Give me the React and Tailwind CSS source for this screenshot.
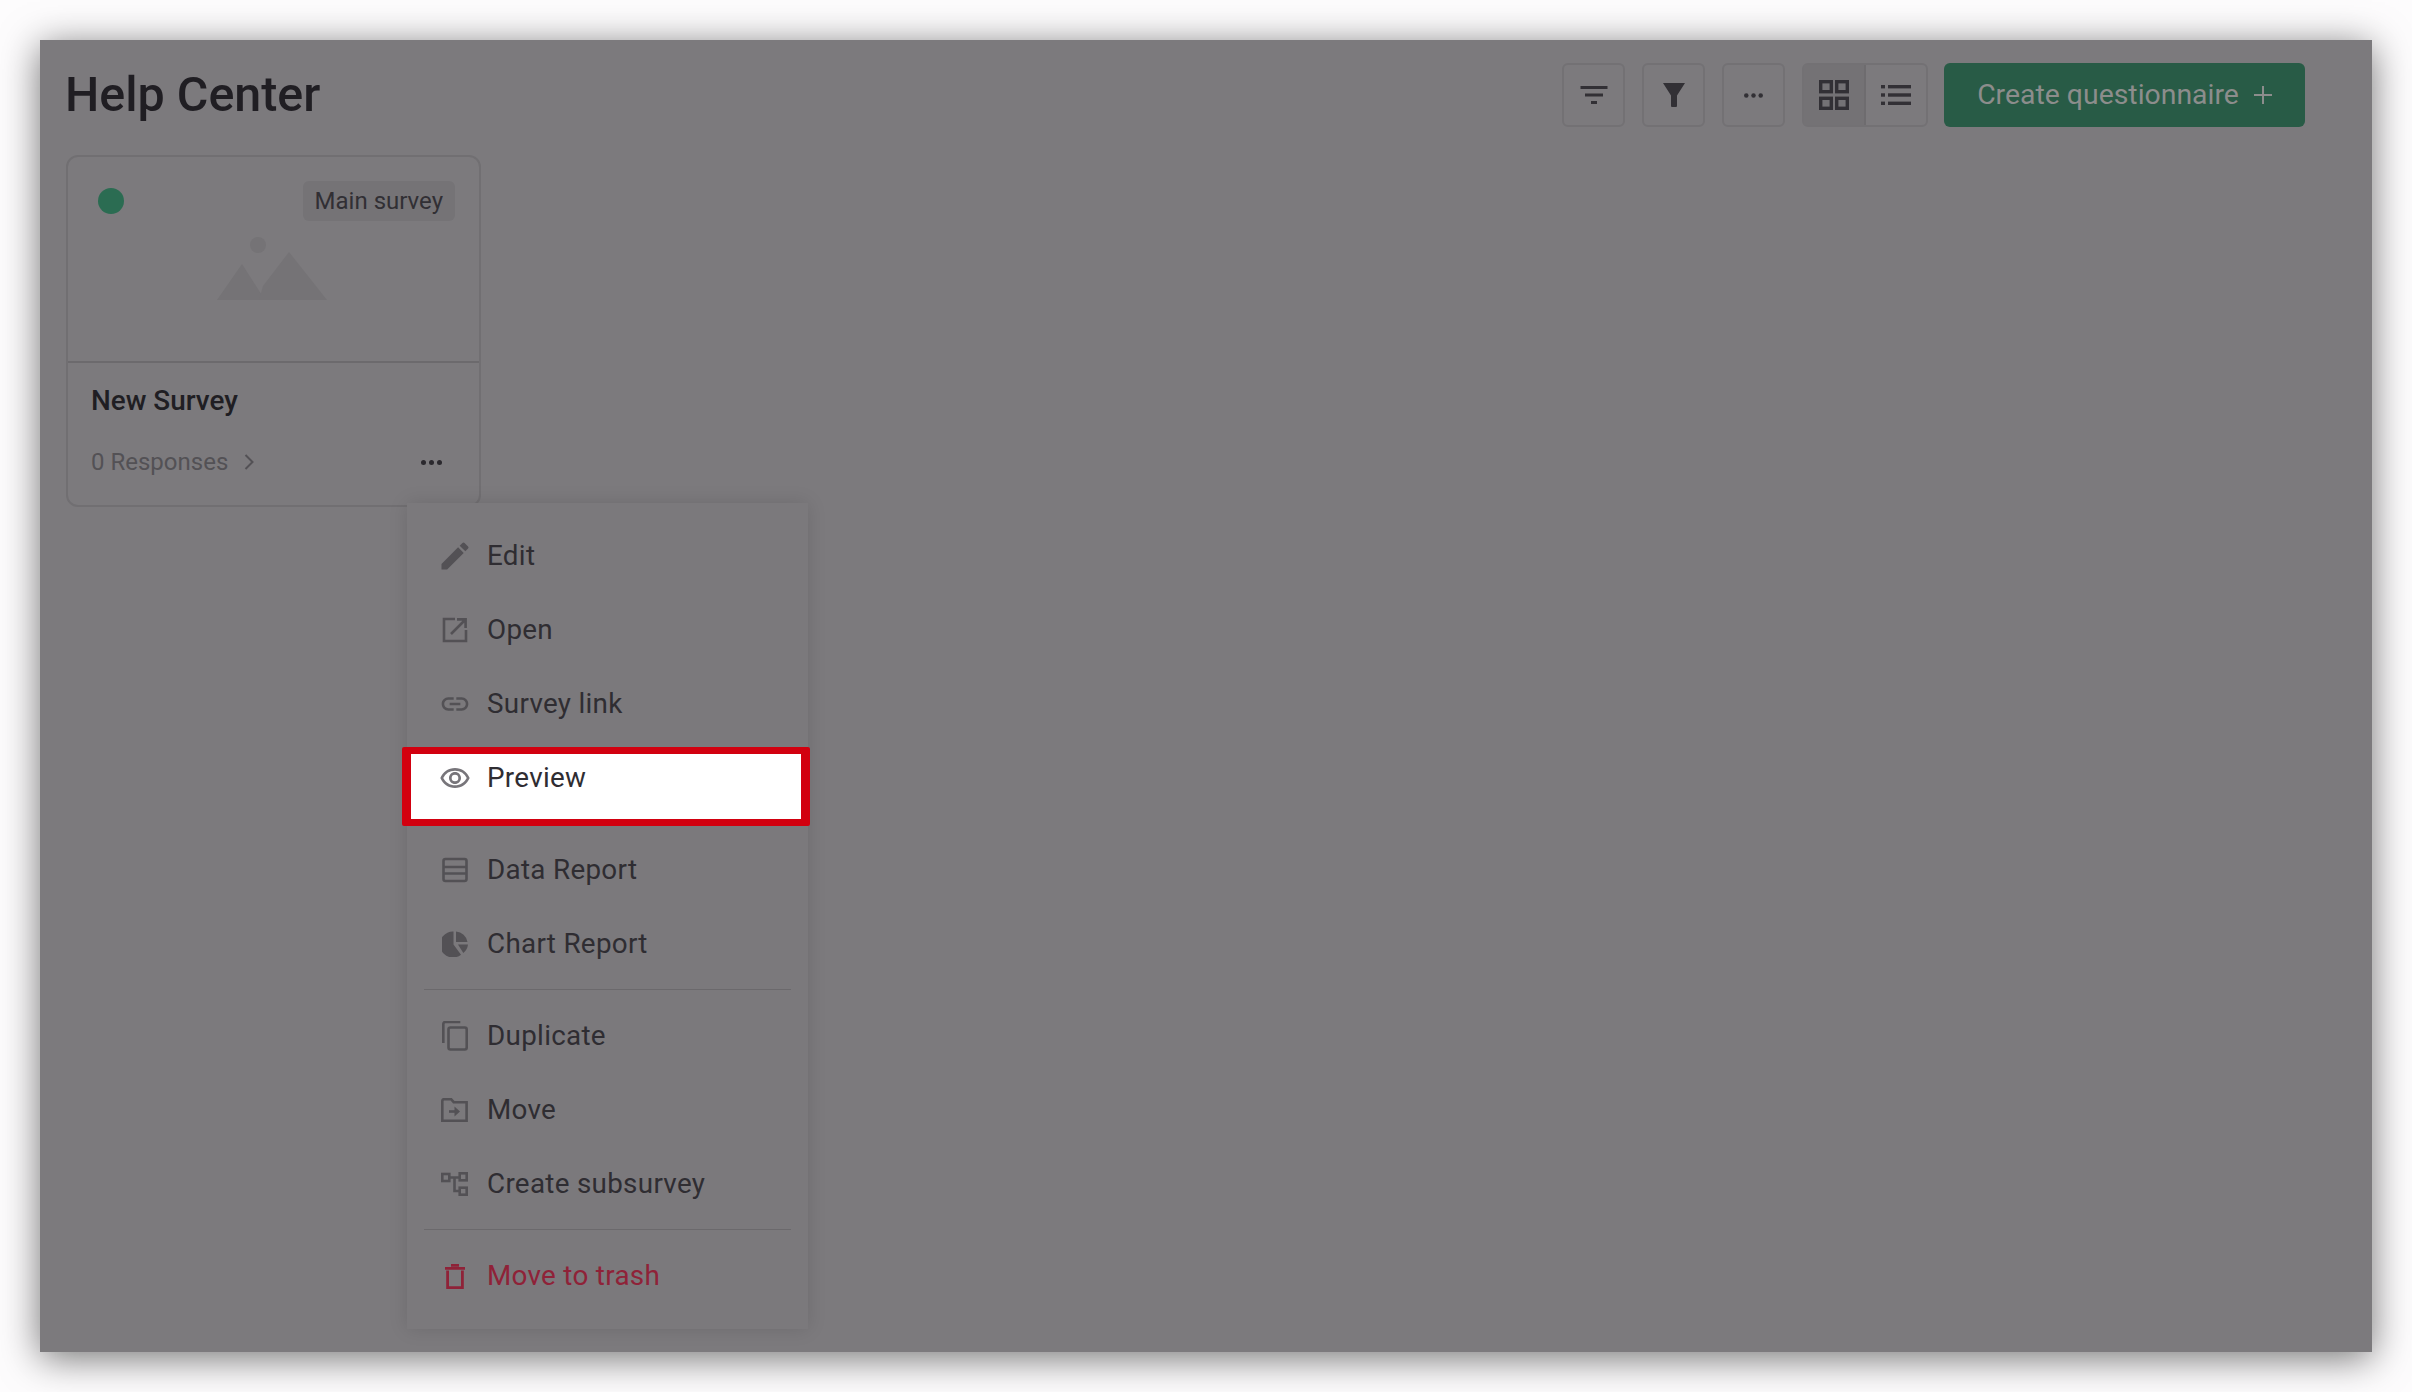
import { MdEdit, MdLink, MdOutlineRemoveRedEye, MdFilterList } from "react-icons/md";

// Icons that the icon packages don't have in this shape
const OpenIcon = () => (
  <svg viewBox="0 0 26 26" className="w-[26px] h-[26px]" fill="none" stroke="currentColor" strokeWidth="2.6">
    <path d="M13 2H2v22h22V13" />
    <path d="M9 17 23 3M15 2.4h8.6V11" />
  </svg>
);

const TableIcon = () => (
  <svg viewBox="0 0 26 26" className="w-[26px] h-[26px]" fill="none" stroke="currentColor" strokeWidth="2.6">
    <rect x="1.5" y="2" width="23" height="22" rx="2" />
    <path d="M1.5 10h23M1.5 16.5h23" />
  </svg>
);

const PieIcon = () => (
  <svg viewBox="0 0 26 26" className="w-[26px] h-[26px]" fill="currentColor">
    <path d="M11.5 0.5v13l7.5 10.2A13 13 0 1 1 11.5 0.5Z" />
    <path d="M14 0.5A12.5 12.5 0 0 1 25.5 11H14Z" />
    <path d="M16 13.5h10a13 13 0 0 1-4.7 8.6Z" />
  </svg>
);

const CopyIcon = () => (
  <svg viewBox="0 0 26 30" className="w-[26px] h-[30px]" fill="none" stroke="currentColor" strokeWidth="2.6">
    <path d="M1.3 22V3a2 2 0 0 1 2-2h15" />
    <rect x="6.5" y="6.5" width="18.2" height="22" rx="2" />
  </svg>
);

const FolderMoveIcon = () => (
  <svg viewBox="0 0 27 24" className="w-[27px] h-[24px]" fill="none" stroke="currentColor" strokeWidth="2.6">
    <path d="M1.3 3a1.8 1.8 0 0 1 1.8-1.8h7l2.6 3h12.9v18.5H1.3Z" />
    <path d="M8 13.5h8" />
    <path d="M13.5 8.5l5.5 5-5.5 5" fill="currentColor" stroke="none" />
  </svg>
);

const TreeIcon = () => (
  <svg viewBox="0 0 27 24" className="w-[27px] h-[24px]" fill="none" stroke="currentColor" strokeWidth="2.6">
    <rect x="1.3" y="2" width="7" height="7" />
    <rect x="18.7" y="1.3" width="7" height="7" />
    <rect x="18.7" y="15.7" width="7" height="7" />
    <path d="M8 5.5h11M13.5 5.5v13.5h5.5" />
  </svg>
);

const TrashIcon = () => (
  <svg viewBox="0 0 20 25" className="w-[20px] h-[25px]" fill="none" stroke="currentColor" strokeWidth="2.8">
    <path d="M2.6 6.5V23.6h14.8V6.5" />
    <path d="M0 4.4h20M6 1.3h8" />
  </svg>
);

const FunnelIcon = () => (
  <svg viewBox="0 0 22 24" className="w-[22px] h-[24px]" fill="currentColor">
    <path d="M0 0h22L14 12.5V23a1 1 0 0 1-1 1H9a1 1 0 0 1-1-1V12.5Z" />
  </svg>
);

const GridIcon = () => (
  <svg viewBox="0 0 30 30" className="w-[30px] h-[30px]" fill="none" stroke="currentColor" strokeWidth="3.4">
    <rect x="1.7" y="1.7" width="10.6" height="10" />
    <rect x="17.7" y="1.7" width="10.6" height="10" />
    <rect x="1.7" y="18.3" width="10.6" height="10" />
    <rect x="17.7" y="18.3" width="10.6" height="10" />
  </svg>
);

const ListIcon = () => (
  <svg viewBox="0 0 30 22" className="w-[30px] h-[22px]" fill="currentColor">
    <rect x="0" y="1" width="4" height="3.4" />
    <rect x="7" y="1" width="23" height="3.4" />
    <rect x="0" y="9.3" width="4" height="3.4" />
    <rect x="7" y="9.3" width="23" height="3.4" />
    <rect x="0" y="17.6" width="4" height="3.4" />
    <rect x="7" y="17.6" width="23" height="3.4" />
  </svg>
);

const Dots = ({ className }) => (
  <span className={`flex gap-[3px] ${className}`}>
    <span className="w-[5px] h-[5px] rounded-full bg-current" />
    <span className="w-[5px] h-[5px] rounded-full bg-current" />
    <span className="w-[5px] h-[5px] rounded-full bg-current" />
  </span>
);

function MenuItem({ icon, label, danger, highlight }) {
  return (
    <div className={`relative h-[74px] flex items-center pl-[34px] ${danger ? "text-[#8f2238]" : "text-[#2f2d32]"}`}>
      {highlight && (
        <div className="absolute left-[-5px] right-[-2px] top-[6px] h-[79px] bg-white border-x-[9px] border-y-[7px] border-[#d2000f] rounded-[2px]" />
      )}
      <span className={`relative w-[27px] flex justify-center shrink-0 ${danger ? "" : highlight ? "text-[#77757a]" : "text-[#535155]"}`}>
        {icon}
      </span>
      <span className="relative ml-[19px] text-[27.8px] leading-none tracking-[0.3px]">{label}</span>
    </div>
  );
}

export default function App() {
  const toolButton = "w-[63px] h-[64px] flex items-center justify-center border-2 border-[#737174] rounded-[6px] text-[#323035]";

  return (
    <div className="w-[2412px] h-[1392px] p-10 bg-[#fdfcfd] font-['Roboto',sans-serif] overflow-hidden">
      <div className="relative w-[2332px] h-[1312px] bg-[#7c7a7d] shadow-[0_6px_36px_rgba(0,0,0,0.55)]">
        {/* Header */}
        <div className="flex items-center justify-between pl-[25px] pr-[67px] pt-[23px]">
          <h1 className="text-[48.4px] leading-none font-medium text-[#201e23]">Help Center</h1>
          <div className="flex items-center">
            <div className={toolButton}>
              <MdFilterList className="w-[36px] h-[36px]" />
            </div>
            <div className={`${toolButton} ml-[17px]`}>
              <FunnelIcon />
            </div>
            <div className={`${toolButton} ml-[17px]`}>
              <Dots className="scale-90" />
            </div>
            <div className="ml-[17px] flex h-[64px] w-[126px] border-2 border-[#737174] rounded-[6px] text-[#323035]">
              <div className="flex-1 flex items-center justify-center bg-[#747275] border-r-2 border-[#6e6c6f]">
                <GridIcon />
              </div>
              <div className="flex-1 flex items-center justify-center">
                <ListIcon />
              </div>
            </div>
            <div className="ml-[16px] w-[361px] h-[64px] rounded-[6px] bg-[#285b46] text-[#8c8d8c] flex items-center justify-center gap-[15px]">
              <span className="text-[28.4px] leading-none">Create questionnaire</span>
              <svg viewBox="0 0 18 18" className="w-[18px] h-[18px]" fill="none" stroke="currentColor" strokeWidth="2">
                <path d="M9 0v18M0 9h18" />
              </svg>
            </div>
          </div>
        </div>

        {/* Survey card */}
        <div className="ml-[26px] mt-[28px] w-[415px] h-[352px] border-2 border-[#716f72] rounded-[12px] flex flex-col">
          <div className="relative h-[206px] border-b-2 border-[#6c6a6d] px-[30px] pt-[24px] flex justify-between items-start">
            <span className="mt-[7px] w-[26px] h-[26px] rounded-full bg-[#2b6c52]" />
            <span className="mr-[-6px] h-[40px] px-[12px] flex items-center rounded-[6px] bg-[#757376] text-[24px] text-[#312f34]">
              Main survey
            </span>
            <svg viewBox="0 0 110 64" className="absolute left-[149px] top-[79px] w-[110px] h-[64px]" fill="#757376">
              <circle cx="41" cy="9" r="8" />
              <path d="M0 64 25 28 48 64Z" />
              <path d="M46 50 72 16 110 64H42Z" />
            </svg>
          </div>
          <div className="flex-1 pl-[23px] pr-[37px] pt-[22px]">
            <div className="text-[27.9px] leading-[32px] font-medium text-[#201e23]">New Survey</div>
            <div className="mt-[33px] flex items-center justify-between">
              <div className="flex items-center text-[#535155]">
                <span className="text-[24px] leading-none">0 Responses</span>
                <svg viewBox="0 0 10 16" className="ml-[16px] w-[10px] h-[16px]" fill="none" stroke="currentColor" strokeWidth="2">
                  <path d="M1.5 1 8.5 8l-7 7" />
                </svg>
              </div>
              <Dots className="text-[#2b292e]" />
            </div>
          </div>
        </div>

        {/* Context menu */}
        <div className="absolute left-[367px] top-[463px] w-[401px] h-[826px] pt-[16px] bg-[#7b797c] shadow-[0_0_18px_rgba(0,0,0,0.12)]">
          <MenuItem icon={<MdEdit className="w-[36px] h-[36px] shrink-0" />} label="Edit" />
          <MenuItem icon={<OpenIcon />} label="Open" />
          <MenuItem icon={<MdLink className="w-[32px] h-[32px] shrink-0" />} label="Survey link" />
          <MenuItem icon={<MdOutlineRemoveRedEye className="w-[32px] h-[32px] shrink-0" />} label="Preview" highlight />
          <div className="h-[18px]" />
          <MenuItem icon={<TableIcon />} label="Data Report" />
          <MenuItem icon={<PieIcon />} label="Chart Report" />
          <div className="h-px mx-[17px] mt-[8px] mb-[9px] bg-[#6b696c]" />
          <MenuItem icon={<CopyIcon />} label="Duplicate" />
          <MenuItem icon={<FolderMoveIcon />} label="Move" />
          <MenuItem icon={<TreeIcon />} label="Create subsurvey" />
          <div className="h-px mx-[17px] mt-[8px] mb-[9px] bg-[#6b696c]" />
          <MenuItem icon={<TrashIcon />} label="Move to trash" danger />
        </div>
      </div>
    </div>
  );
}
